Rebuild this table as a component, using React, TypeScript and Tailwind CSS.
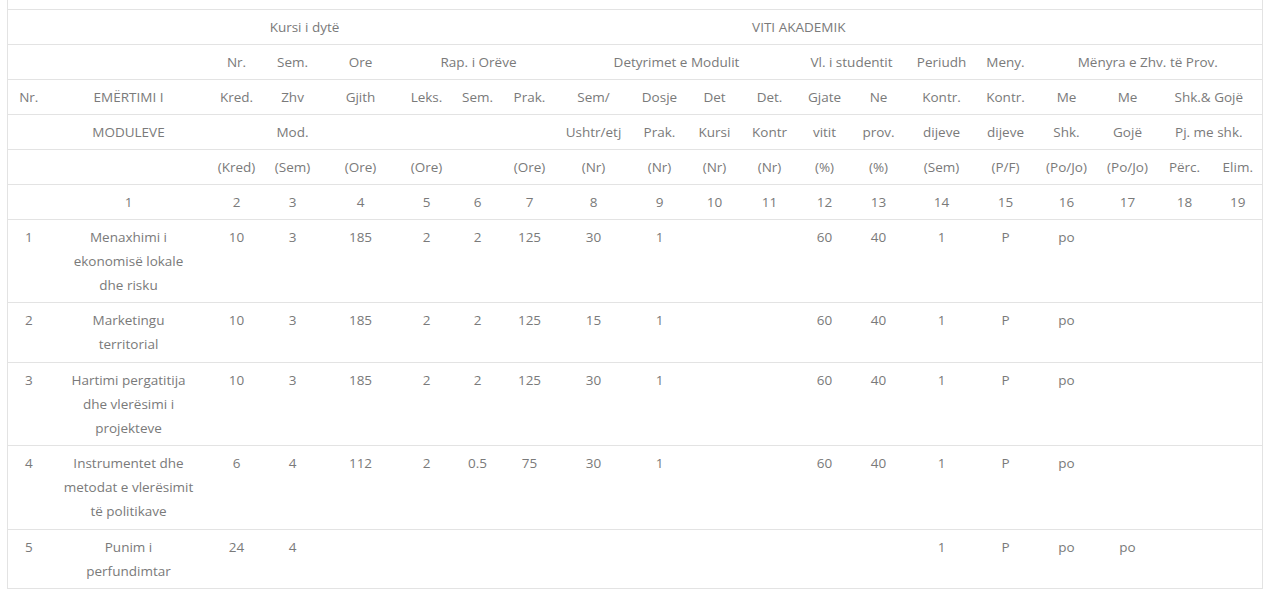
const widths = [42, 158, 58, 54, 82, 50, 52, 52, 76, 56, 54, 56, 54, 54, 72, 56, 66, 56, 58, 49];

type Cell = { t?: string; span?: number };

const headRows: Cell[][] = [
  [{ span: 2 }, { t: "Kursi i dytë", span: 3 }, { t: "VITI AKADEMIK", span: 15 }],
  [
    { span: 2 },
    { t: "Nr." },
    { t: "Sem." },
    { t: "Ore" },
    { t: "Rap. i Orëve", span: 3 },
    { t: "Detyrimet e Modulit", span: 4 },
    { t: "Vl. i studentit", span: 2 },
    { t: "Periudh" },
    { t: "Meny." },
    { t: "Mënyra e Zhv. të Prov.", span: 4 },
  ],
  [
    { t: "Nr." },
    { t: "EMËRTIMI I" },
    { t: "Kred." },
    { t: "Zhv" },
    { t: "Gjith" },
    { t: "Leks." },
    { t: "Sem." },
    { t: "Prak." },
    { t: "Sem/" },
    { t: "Dosje" },
    { t: "Det" },
    { t: "Det." },
    { t: "Gjate" },
    { t: "Ne" },
    { t: "Kontr." },
    { t: "Kontr." },
    { t: "Me" },
    { t: "Me" },
    { t: "Shk.& Gojë", span: 2 },
  ],
  [
    {},
    { t: "MODULEVE" },
    {},
    { t: "Mod." },
    {},
    {},
    {},
    {},
    { t: "Ushtr/etj" },
    { t: "Prak." },
    { t: "Kursi" },
    { t: "Kontr" },
    { t: "vitit" },
    { t: "prov." },
    { t: "dijeve" },
    { t: "dijeve" },
    { t: "Shk." },
    { t: "Gojë" },
    { t: "Pj. me shk.", span: 2 },
  ],
  [
    {},
    {},
    { t: "(Kred)" },
    { t: "(Sem)" },
    { t: "(Ore)" },
    { t: "(Ore)" },
    {},
    { t: "(Ore)" },
    { t: "(Nr)" },
    { t: "(Nr)" },
    { t: "(Nr)" },
    { t: "(Nr)" },
    { t: "(%)" },
    { t: "(%)" },
    { t: "(Sem)" },
    { t: "(P/F)" },
    { t: "(Po/Jo)" },
    { t: "(Po/Jo)" },
    { t: "Përc." },
    { t: "Elim." },
  ],
  [{}, ...Array.from({ length: 19 }, (_, i) => ({ t: String(i + 1) }))],
];

const modules: { name: string[]; vals: string[]; h: string }[] = [
  {
    name: ["Menaxhimi i", "ekonomisë lokale", "dhe risku"],
    vals: ["10", "3", "185", "2", "2", "125", "30", "1", "", "", "60", "40", "1", "P", "po", "", "", ""],
    h: "h-[83px]",
  },
  {
    name: ["Marketingu", "territorial"],
    vals: ["10", "3", "185", "2", "2", "125", "15", "1", "", "", "60", "40", "1", "P", "po", "", "", ""],
    h: "h-[60px]",
  },
  {
    name: ["Hartimi pergatitija", "dhe vlerësimi i", "projekteve"],
    vals: ["10", "3", "185", "2", "2", "125", "30", "1", "", "", "60", "40", "1", "P", "po", "", "", ""],
    h: "h-[83px]",
  },
  {
    name: ["Instrumentet dhe", "metodat e vlerësimit", "të politikave"],
    vals: ["6", "4", "112", "2", "0.5", "75", "30", "1", "", "", "60", "40", "1", "P", "po", "", "", ""],
    h: "h-[84px]",
  },
  {
    name: ["Punim i", "perfundimtar"],
    vals: ["24", "4", "", "", "", "", "", "", "", "", "", "", "1", "P", "po", "po", "", ""],
    h: "h-[59px]",
  },
];

export default function App() {
  return (
    <div className="min-h-screen bg-white font-['Open_Sans',sans-serif] text-[13.5px] text-[#7a7a7a]">
      <table className="ml-[7px] w-[1255px] table-fixed border-collapse border-x border-b border-[#e3e3e3]">
        <colgroup>
          {widths.map((w, i) => (
            <col key={i} style={{ width: w }} />
          ))}
        </colgroup>
        <tbody>
          {/* row cut at the top of the page */}
          <tr className="h-[9px]">
            <td colSpan={20} className="p-0" />
          </tr>

          {headRows.map((row, r) => (
            <tr key={r} className={`border-t border-[#e3e3e3] ${r === 3 ? "h-[33px]" : "h-[35px]"}`}>
              {row.map((c, i) => (
                <td
                  key={i}
                  colSpan={c.span}
                  className={
                    c.t === "VITI AKADEMIK"
                      ? "whitespace-nowrap py-[5px] pr-[66px] text-center align-top leading-[24px]"
                      : "whitespace-nowrap px-0 py-[5px] text-center align-top leading-[24px]"
                  }
                >
                  {c.t}
                </td>
              ))}
            </tr>
          ))}

          {modules.map((m, r) => (
            <tr key={r} className={`border-t border-[#e3e3e3] ${m.h}`}>
              <td className="py-[5px] text-center align-top leading-[24px]">{r + 1}</td>
              <td className="py-[5px] text-center align-top leading-[24px] whitespace-nowrap">
                {m.name.map((line, i) => (
                  <div key={i}>{line}</div>
                ))}
              </td>
              {m.vals.map((v, i) => (
                <td key={i} className="py-[5px] text-center align-top leading-[24px]">
                  {v}
                </td>
              ))}
            </tr>
          ))}
        </tbody>
      </table>
    </div>
  );
}
